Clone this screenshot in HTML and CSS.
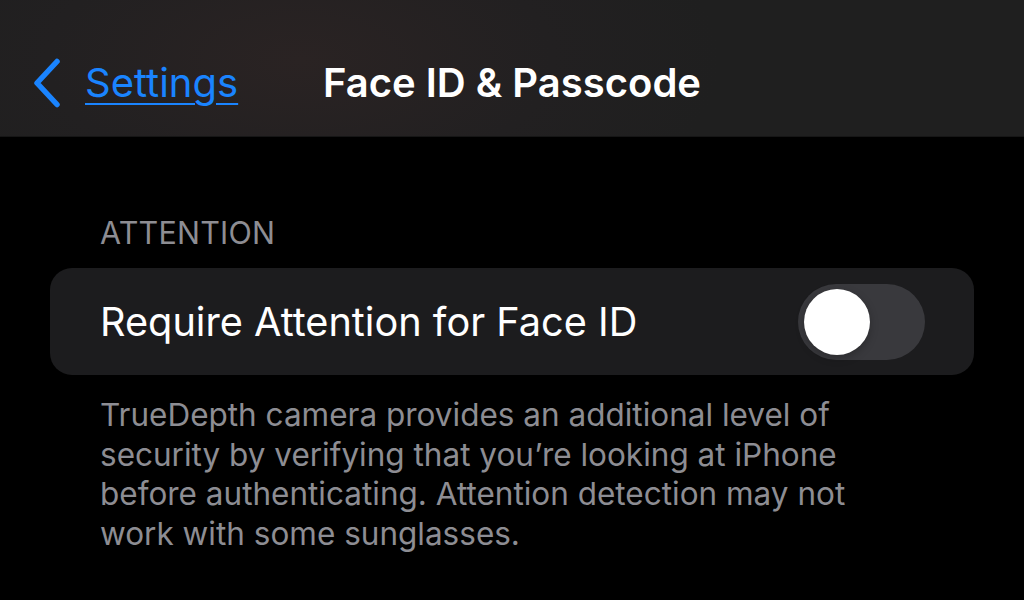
FILE: index.html
```html
<!DOCTYPE html>
<html>
<head>
<meta charset="utf-8">
<link rel="stylesheet" href="styles.css">
</head>
<body>
<header class="navbar">
  <a class="back" href="#">
    <svg class="chevron" width="30" height="50" viewBox="0 0 30 50"><path d="M26 3.5 L6 25 L26 46.5" fill="none" stroke="#1a84ff" stroke-width="5.5" stroke-linecap="round" stroke-linejoin="round"/></svg>
    <span class="back-label">Settings</span>
  </a>
  <h1 class="title">Face ID &amp; Passcode</h1>
  <div class="spacer"></div>
</header>
<main class="content">
  <div class="section-header">ATTENTION</div>
  <div class="group">
    <div class="row">
      <span class="row-label">Require Attention for Face ID</span>
      <div class="switch"><div class="knob"></div></div>
    </div>
  </div>
  <p class="footer">TrueDepth camera provides an additional level of security by verifying that you’re looking at iPhone before authenticating. Attention detection may not work with some sunglasses.</p>
</main>
</body>
</html>
```
FILE: styles.css
```css
html, body {
  margin: 0;
  padding: 0;
  background: #000;
  width: 1024px;
  height: 600px;
  overflow: hidden;
  font-family: Inter, "Noto Sans", sans-serif;
}
.navbar {
  height: 137px;
  display: grid;
  grid-template-columns: 1fr auto 1fr;
  align-items: center;
  padding-top: 28px;
  background: radial-gradient(ellipse 420px 200px at 300px 60px, #2a2323 0%, #222021 60%, #1f1f1f 100%);
  border-bottom: 1px solid #161616;
  box-sizing: border-box;
}
.back {
  display: flex;
  align-items: center;
  gap: 24px;
  padding-left: 31px;
  color: #1a84ff;
  text-decoration: none;
}
.chevron { display: block; margin-top: 2px; }
.back-label {
  font-size: 40px;
  text-decoration: underline;
  text-decoration-thickness: 2px;
  text-underline-offset: 6px;
}
.title {
  margin: 0;
  color: #fff;
  font-size: 40px;
  font-weight: 600;
}
.content {
  padding: 78px 50px 0 50px;
}
.section-header {
  color: #8d8d93;
  font-size: 30.5px;
  padding-left: 50px;
  line-height: 36px;
  letter-spacing: 0.2px;
}
.group {
  margin-top: 17px;
  background: #1c1c1e;
  border-radius: 22px;
}
.row {
  height: 107px;
  display: flex;
  align-items: center;
  justify-content: space-between;
  padding: 0 49px 0 50px;
}
.row-label {
  color: #fff;
  font-size: 39.7px;
}
.switch {
  width: 127px;
  height: 76px;
  border-radius: 38px;
  background: #39393d;
  display: flex;
  align-items: center;
  padding-left: 6px;
  box-sizing: border-box;
}
.knob {
  width: 66px;
  height: 66px;
  border-radius: 50%;
  background: #fff;
  box-shadow: 0 3px 8px rgba(0,0,0,0.25);
}
.footer {
  margin: 20px 0 0 0;
  padding: 0 50px;
  color: #8d8d93;
  font-size: 31.5px;
  line-height: 39.5px;
  width: 770px;
}
```
